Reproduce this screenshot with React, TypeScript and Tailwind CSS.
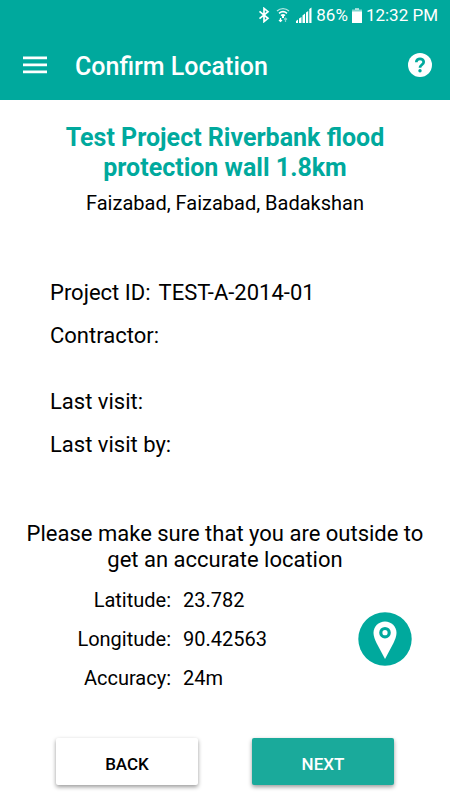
const details = [
  { label: "Project ID:", value: "TEST-A-2014-01" },
  { label: "Contractor:", value: "" },
];

const visits = [
  { label: "Last visit:", value: "" },
  { label: "Last visit by:", value: "" },
];

const position = [
  { label: "Latitude:", value: "23.782" },
  { label: "Longitude:", value: "90.42563" },
  { label: "Accuracy:", value: "24m" },
];

function BluetoothIcon() {
  return (
    <svg width="12" height="16" viewBox="0 0 12 16" fill="none" stroke="currentColor" strokeWidth="1.7">
      <path d="M1.5 4.300L10 11.300 6 14.600V1.400L10 4.700 1.500 11.700" />
    </svg>
  );
}

function WifiIcon() {
  return (
    <svg width="14" height="16" viewBox="0 0 14 16" fill="none" stroke="currentColor">
      <path d="M1 4C4.5 .8 9.5 .8 13 4" strokeWidth="1.4" opacity=".7" />
      <path d="M3 6.3c2.400-2 5.600-2 8 0M5 8.600c1.200-1 2.800-1 4 0" strokeWidth="1.500" />
      <path d="M7 8v3" strokeWidth="2" />
      <path d="M4.500 11v3M3 13l1.500 1.500L6 13" strokeWidth="1.200" />
      <path d="M9.500 15v-3.500M8 12.500l1.500-1.500 1.500 1.500" strokeWidth="1.200" opacity=".5" />
    </svg>
  );
}

function SignalIcon() {
  return (
    <svg width="16" height="16" viewBox="0 0 16 16" fill="currentColor">
      <path d="M0 14l2-1.500V16H0zM3 11.500L5.500 10v6H3zM6.500 8.500L9 6.500V16H6.500zM10 5.500L12.200 4v12H10zM13.300 2L15.500 .5V16h-2.200z" />
    </svg>
  );
}

function BatteryIcon() {
  return (
    <svg width="10" height="15" viewBox="0 0 10 15" fill="currentColor">
      <path d="M3 0h4v2H3z" opacity=".6" />
      <path d="M0 1.500h10V4H0z" opacity=".5" />
      <path d="M0 3.500h10V15H0z" />
    </svg>
  );
}

function MenuIcon() {
  return (
    <svg width="24" height="18" viewBox="0 0 24 18" fill="currentColor">
      <path d="M0 .5h24v2.700H0zM0 7.500h24v2.700H0zM0 14.500h24v2.700H0z" />
    </svg>
  );
}

function HelpIcon() {
  return (
    <svg width="24" height="24" viewBox="0 0 24 24">
      <circle cx="12" cy="12" r="12" fill="currentColor" />
      <path
        d="M8.300 9.200C8.300 4.600 15.700 4.800 15.700 9c0 2.600-3.700 3-3.700 5.800"
        fill="none"
        stroke="#00a99d"
        strokeWidth="2.700"
      />
      <circle cx="12" cy="17.800" r="1.700" fill="#00a99d" />
    </svg>
  );
}

function PinIcon() {
  return (
    <svg width="54" height="54" viewBox="0 0 54 54">
      <circle cx="27" cy="27" r="26.700" fill="#00a99d" />
      <path
        d="M27 9.500c-6.400 0-11.500 5-11.500 11.300 0 3.200 1.300 6.500 3 10.200L27 47l8.500-16c1.700-3.700 3-7 3-10.200C38.500 14.500 33.400 9.500 27 9.500z"
        fill="#fff"
      />
      <circle cx="27" cy="20.700" r="4.200" fill="none" stroke="#00a99d" strokeWidth="3.200" />
    </svg>
  );
}

function DetailList({ rows }: { rows: { label: string; value: string }[] }) {
  return (
    <dl className="flex flex-col gap-[13px] text-[22px] leading-[30px]">
      {rows.map((row) => (
        <div key={row.label} className="flex gap-2">
          <dt>{row.label}</dt>
          <dd>{row.value}</dd>
        </div>
      ))}
    </dl>
  );
}

export default function App() {
  return (
    <div className="min-h-screen bg-white font-[Roboto,sans-serif] text-black">
      <header className="bg-[#00a99d] text-white">
        <div className="flex h-[30px] items-center justify-end pr-3 text-[17px] leading-5">
          <BluetoothIcon />
          <span className="mx-1.5">
            <WifiIcon />
          </span>
          <SignalIcon />
          <span className="mx-1">86%</span>
          <BatteryIcon />
          <span className="ml-1">12:32 PM</span>
        </div>
        <div className="flex h-[70px] items-center pl-[23px] pr-[18px]">
          <button type="button" aria-label="Menu">
            <MenuIcon />
          </button>
          <h1 className="ml-7 flex-1 pt-1 text-[25px] font-medium leading-8">Confirm Location</h1>
          <button type="button" aria-label="Help">
            <HelpIcon />
          </button>
        </div>
      </header>

      <main>
        <section className="px-10 pt-[23px] text-center">
          <h2 className="text-[25px] font-bold leading-[30px] text-[#00a99d]">
            Test Project Riverbank flood protection wall 1.8km
          </h2>
          <p className="mt-2 text-[20px] leading-6">Faizabad, Faizabad, Badakshan</p>
        </section>

        <section className="mt-[63px] flex flex-col gap-9 px-[50px]">
          <DetailList rows={details} />
          <DetailList rows={visits} />
        </section>

        <p className="mt-[61px] px-4 text-center text-[22px] leading-[26px]">
          Please make sure that you are outside to get an accurate location
        </p>

        <section className="mt-[15px] flex items-center justify-between pr-[38px]">
          <dl className="flex flex-col gap-[15px] text-[20px] leading-6">
            {position.map((row) => (
              <div key={row.label} className="flex gap-3">
                <dt className="w-[171px] text-right">{row.label}</dt>
                <dd>{row.value}</dd>
              </div>
            ))}
          </dl>
          <button type="button" aria-label="Update location">
            <PinIcon />
          </button>
        </section>

        <div className="mt-12 flex gap-[54px] px-14 pb-[14px] text-[17px] font-medium">
          <button
            type="button"
            className="h-[47px] flex-1 rounded-xs bg-white pt-1.5 shadow-[0_2px_4px_rgba(0,0,0,0.4)]"
          >
            BACK
          </button>
          <button
            type="button"
            className="h-[47px] flex-1 rounded-xs bg-[#1aaa9b] pt-1.5 text-white shadow-[0_2px_4px_rgba(0,0,0,0.4)]"
          >
            NEXT
          </button>
        </div>
      </main>
    </div>
  );
}
